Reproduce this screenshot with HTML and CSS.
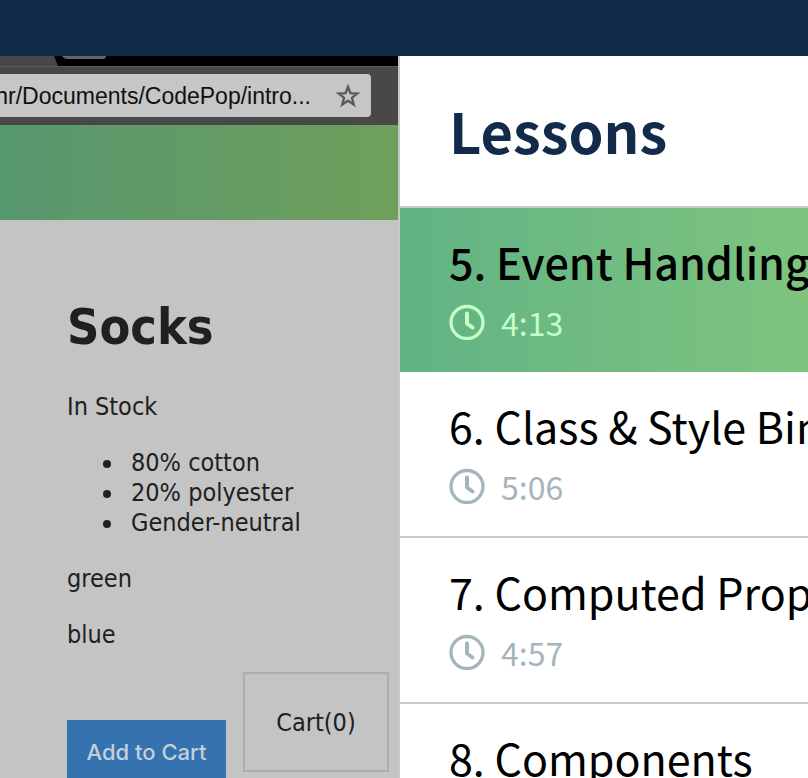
FILE: index.html
```html
<!DOCTYPE html>
<html lang="en">
<head>
<meta charset="utf-8">
<title>Lessons</title>
<link rel="stylesheet" href="styles.css">
</head>
<body>
<svg class="sprite" aria-hidden="true">
  <symbol id="clock" viewBox="0 0 36 36">
    <circle cx="18" cy="18.500" r="16" fill="none" stroke="currentColor" stroke-width="3.300"/>
    <path d="M18 9.500v10l5.500 4" fill="none" stroke="currentColor" stroke-width="4" stroke-linecap="round" stroke-linejoin="round"/>
  </symbol>
</svg>
<header class="topbar"></header>
<div class="layout">
  <section class="player">
    <div class="tabs">
      <svg class="tab-shape" viewBox="0 0 400 10" aria-hidden="true">
        <path d="M0 0H54L58 10H0Z" fill="#484848"/>
        <path d="M62 0H106Q106 3 103 3H68Q64 3 62 0Z" fill="#646464"/>
      </svg>
    </div>
    <div class="toolbar">
      <div class="address">
        <input class="address-input" type="text" aria-label="Address" value="hr/Documents/CodePop/intro..." readonly>
        <svg class="star" viewBox="0 0 24 24" aria-hidden="true"><path d="M12 2.800l2.400 6.400 6.900.300-5.400 4.300 1.900 6.700-5.800-3.800-5.800 3.800 1.900-6.700-5.400-4.300 6.900-.300z" fill="none" stroke="#5a5a5a" stroke-width="2.300"/></svg>
      </div>
    </div>
    <div class="banner"></div>
    <div class="product">
      <h1 class="product-name">Socks</h1>
      <p>In Stock</p>
      <ul>
        <li>80% cotton</li>
        <li>20% polyester</li>
        <li>Gender-neutral</li>
      </ul>
      <p>green</p>
      <p>blue</p>
      <button class="add" type="button">Add to Cart</button>
      <div class="cart">Cart(0)</div>
    </div>
  </section>
  <aside class="lessons">
    <h2 class="lessons-title">Lessons</h2>
    <a class="lesson lesson-active" href="#5">
      <span class="lesson-name">5. Event Handling</span>
      <span class="lesson-time"><svg class="clock" aria-hidden="true"><use href="#clock"/></svg>4:13</span>
    </a>
    <a class="lesson" href="#6">
      <span class="lesson-name">6. Class &amp; Style Bindings</span>
      <span class="lesson-time"><svg class="clock" aria-hidden="true"><use href="#clock"/></svg>5:06</span>
    </a>
    <a class="lesson" href="#7">
      <span class="lesson-name">7. Computed Properties</span>
      <span class="lesson-time"><svg class="clock" aria-hidden="true"><use href="#clock"/></svg>4:57</span>
    </a>
    <a class="lesson" href="#8">
      <span class="lesson-name">8. Components</span>
    </a>
  </aside>
</div>
</body>
</html>
```
FILE: styles.css
```css
* { box-sizing: border-box; }
body {
  margin: 0;
  height: 100vh;
  overflow: hidden;
  display: flex;
  flex-direction: column;
  background: #fff;
  font-family: "Noto Sans CJK SC", sans-serif;
}
.sprite { display: none; }
.topbar { flex: none; height: 56px; background: #122b4a; }
.layout {
  flex: 1;
  min-height: 0;
  display: grid;
  grid-template-columns: minmax(0, 100fr) minmax(0, 102fr);
}
.player {
  min-height: 0;
  overflow: hidden;
  display: flex;
  flex-direction: column;
  border-right: 2px solid #c8c8c8;
  background: #c4c4c4;
  color: #202020;
  font: 25px/30px "DejaVu Sans Condensed", "DejaVu Sans", sans-serif;
}
.tabs { flex: none; height: 10px; background: #000; overflow: hidden; }
.tab-shape { display: block; width: 400px; height: 10px; }
.toolbar {
  flex: none;
  height: 59px;
  padding: 7px 27px 8px 0;
  background: #484848;
  border-top: 1px solid #5c5c5c;
}
.address {
  height: 43px;
  padding-right: 11px;
  display: flex;
  align-items: center;
  justify-content: flex-end;
  gap: 25px;
  overflow: hidden;
  border-radius: 0 4px 4px 0;
  background: #c6c6c6;
}
.address-input {
  flex: none;
  width: 340px;
  padding: 0;
  border: 0;
  background: none;
  color: #101010;
  font: 23px/28px "Liberation Sans", sans-serif;
  text-align: right;
}
.star { flex: none; width: 24px; height: 24px; }
.banner { flex: none; height: 95px; background: linear-gradient(90deg, #57976f, #6f9f5b); }
.product { flex: 1; position: relative; padding: 77px 24px 0 67px; }
.product p, .product ul { margin: 0 0 26px; }
.product ul { padding-left: 58px; }
.product li { padding-left: 6px; }
.product-name { margin: 0 0 35px; font-size: 50px; line-height: 60px; }
.add {
  display: block;
  width: 159px;
  height: 64px;
  margin-top: 70px;
  padding: 0;
  border: 0;
  background: #3472b0;
  color: #c4d0d8;
  font: 500 22px/28px Inter, sans-serif;
}
.cart {
  position: absolute;
  right: 9px;
  top: 452px;
  width: 146px;
  height: 100px;
  border: 2px solid #adadad;
  line-height: 98px;
  text-align: center;
}
.lessons { min-height: 0; overflow: hidden; }
.lessons-title {
  margin: 0;
  padding: 0 49px 2px;
  border-bottom: 2px solid #c8c8c8;
  color: #122b4a;
  font-size: 56px;
  line-height: 148px;
}
.lesson {
  display: block;
  padding: 22px 0 20px 49px;
  border-bottom: 2px solid #c8c8c8;
  color: #000;
  text-decoration: none;
  white-space: nowrap;
}
.lesson-active { border: 0; background: linear-gradient(90deg, #61b385, #7ec47e); }
.lesson-name { display: block; font-size: 43px; line-height: 62px; }
.lesson-active .lesson-name { font-weight: 500; }
.lesson-time {
  display: flex;
  align-items: center;
  gap: 16px;
  color: #a4b6bc;
  font-size: 32px;
  line-height: 60px;
}
.lesson-active .lesson-time { color: #c6ffc6; }
.clock { width: 36px; height: 36px; }
```
